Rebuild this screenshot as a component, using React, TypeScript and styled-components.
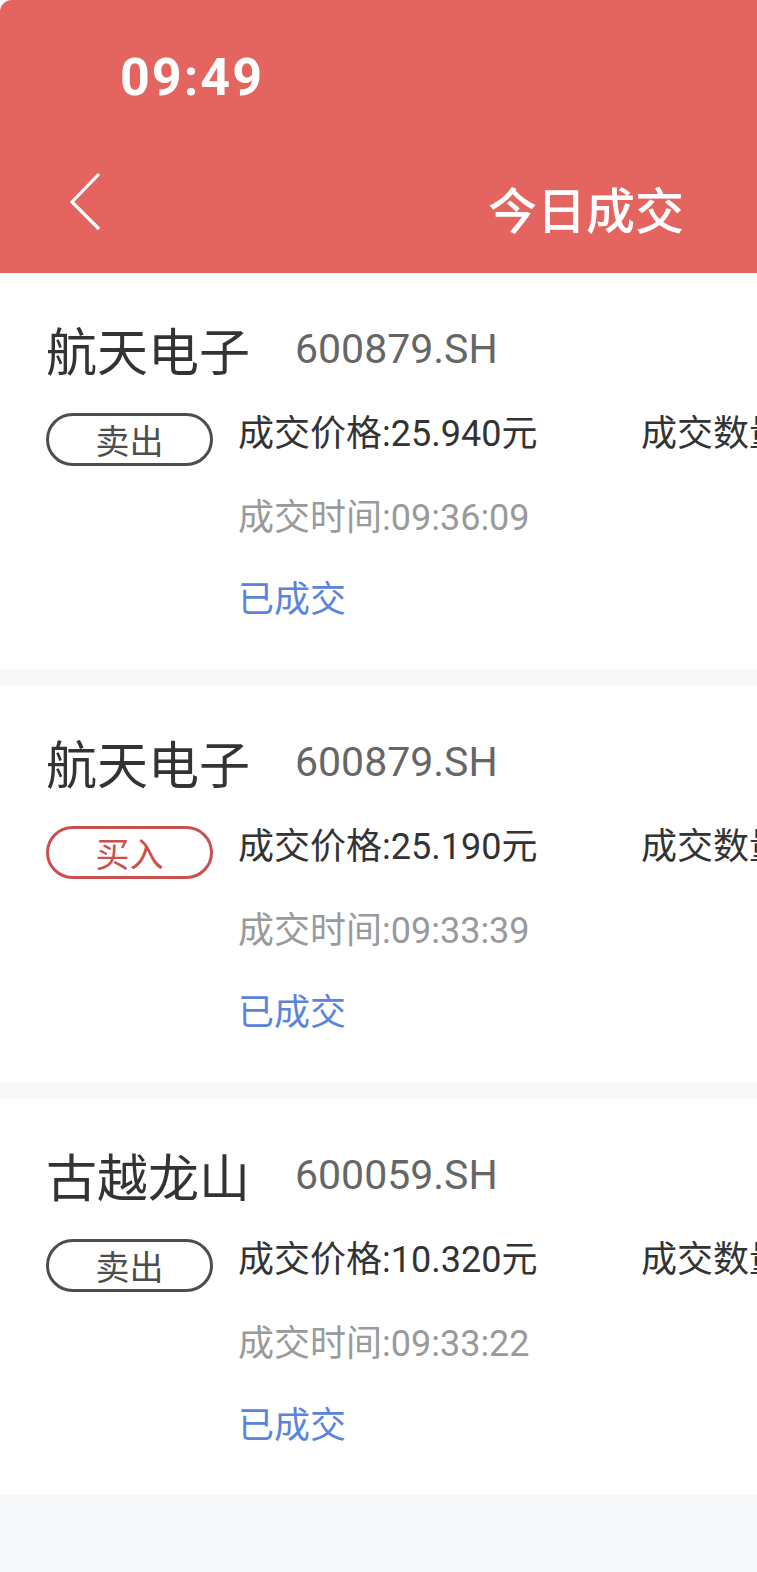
import React from "react";
import styled, { createGlobalStyle } from "styled-components";

const GlobalStyle = createGlobalStyle`
  html, body {
    margin: 0;
    padding: 0;
    background: #f7f8fa;
    overflow-x: hidden;
  }
  body {
    font-family: Roboto, "Noto Sans CJK SC", sans-serif;
  }
  * { box-sizing: border-box; }
`;

const Page = styled.div`
  width: 757px;
  min-height: 1572px;
  background: #f7f8fa;
  overflow: hidden;
`;

const Header = styled.header`
  height: 273px;
  background: #e4645f;
  border-top-left-radius: 12px;
  color: #ffffff;
  display: flex;
  flex-direction: column;
`;

const StatusBar = styled.div`
  height: 150px;
  padding: 52px 0 0 120px;
`;

const Clock = styled.span`
  font-family: Roboto, "Noto Sans CJK SC", sans-serif;
  font-weight: 700;
  font-size: 52px;
  line-height: 52px;
  letter-spacing: 2px;
  display: block;
`;

const NavBar = styled.div`
  height: 123px;
  display: flex;
  align-items: center;
  justify-content: space-between;
  padding: 0 73px 18px 68px;
`;

const BackButton = styled.button`
  border: none;
  background: transparent;
  padding: 0;
  width: 36px;
  height: 62px;
  display: flex;
  align-items: center;
  justify-content: center;
  cursor: pointer;
`;

const Title = styled.h1`
  margin: 0;
  font-family: "Noto Sans CJK SC", sans-serif;
  font-weight: 500;
  font-size: 49px;
  line-height: 60px;
  padding-top: 10px;
`;

const List = styled.main`
  display: flex;
  flex-direction: column;
  gap: 17px;
`;

const Card = styled.section`
  height: 396px;
  background: #ffffff;
  padding: 40px 0 0 46px;
  overflow: hidden;
`;

const NameRow = styled.div`
  height: 72px;
  display: flex;
  align-items: center;
  gap: 45px;
  white-space: nowrap;
`;

const StockName = styled.span`
  font-family: "Noto Sans CJK SC", sans-serif;
  font-size: 51px;
  color: #333333;
  line-height: 72px;
`;

const StockCode = styled.span`
  font-family: Roboto, "Noto Sans CJK SC", sans-serif;
  font-size: 41px;
  color: #666666;
  line-height: 72px;
`;

const Body = styled.div`
  margin-top: 28px;
  display: flex;
  align-items: flex-start;
  gap: 25px;
`;

const Badge = styled.div<{ $buy?: boolean }>`
  flex: none;
  width: 167px;
  height: 53px;
  border: 3px solid ${(p) => (p.$buy ? "#c9504c" : "#4d4d4d")};
  border-radius: 27px;
  color: ${(p) => (p.$buy ? "#c9504c" : "#4d4d4d")};
  font-family: "Noto Sans CJK SC", sans-serif;
  font-size: 34px;
  line-height: 47px;
  text-align: center;
`;

const Details = styled.div`
  margin-top: -5px;
  display: flex;
  flex-direction: column;
  white-space: nowrap;
`;

const PriceRow = styled.div`
  display: flex;
`;

const Line = styled.div<{ $tone?: "main" | "muted" | "link"; $width?: number; $gap?: number }>`
  font-size: 36px;
  line-height: 52px;
  margin-top: ${(p) => p.$gap ?? 0}px;
  color: ${(p) =>
    p.$tone === "muted" ? "#9a9a9a" : p.$tone === "link" ? "#5b84dc" : "#333333"};
  ${(p) => (p.$width ? `width: ${p.$width}px; flex: none;` : "")}
`;

type Trade = {
  name: string;
  code: string;
  side: "buy" | "sell";
  price: string;
  qty: string;
  time: string;
};

const trades: Trade[] = [
  { name: "航天电子", code: "600879.SH", side: "sell", price: "25.940", qty: "100", time: "09:36:09" },
  { name: "航天电子", code: "600879.SH", side: "buy", price: "25.190", qty: "100", time: "09:33:39" },
  { name: "古越龙山", code: "600059.SH", side: "sell", price: "10.320", qty: "100", time: "09:33:22" },
];

const BackIcon = () => (
  <svg width="36" height="62" viewBox="0 0 36 62" fill="none">
    <path d="M31 2 L4 30 L31 57" stroke="#ffffff" strokeWidth="3.2" strokeLinejoin="miter" />
  </svg>
);

export default function App() {
  return (
    <Page>
      <GlobalStyle />
      <Header>
        <StatusBar>
          <Clock>09:49</Clock>
        </StatusBar>
        <NavBar>
          <BackButton aria-label="返回">
            <BackIcon />
          </BackButton>
          <Title>今日成交</Title>
        </NavBar>
      </Header>
      <List>
        {trades.map((t, i) => (
          <Card key={i}>
            <NameRow>
              <StockName>{t.name}</StockName>
              <StockCode>{t.code}</StockCode>
            </NameRow>
            <Body>
              <Badge $buy={t.side === "buy"}>{t.side === "buy" ? "买入" : "卖出"}</Badge>
              <Details>
                <PriceRow>
                  <Line $width={403}>成交价格:{t.price}元</Line>
                  <Line>成交数量:{t.qty}股</Line>
                </PriceRow>
                <Line $tone="muted" $gap={32}>成交时间:{t.time}</Line>
                <Line $tone="link" $gap={30}>已成交</Line>
              </Details>
            </Body>
          </Card>
        ))}
      </List>
    </Page>
  );
}
